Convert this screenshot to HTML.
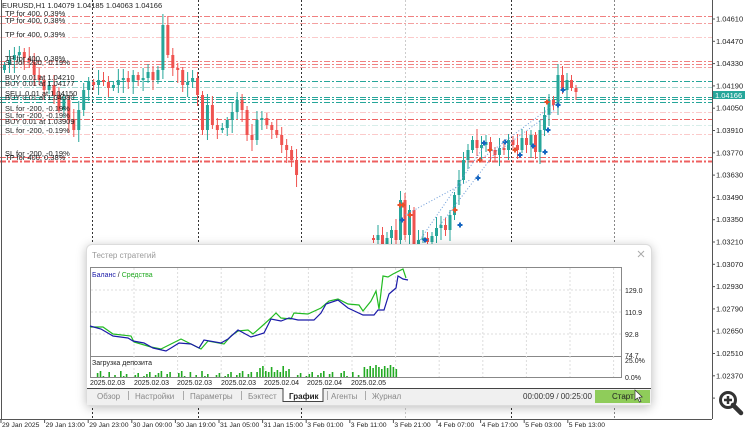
<!DOCTYPE html>
<html><head><meta charset="utf-8"><style>
html,body{margin:0;padding:0;width:750px;height:432px;overflow:hidden;background:#fff;font-family:"Liberation Sans","DejaVu Sans",sans-serif}
svg text{font-family:"Liberation Sans","DejaVu Sans",sans-serif}
#dlg{position:absolute;left:86px;top:244px;width:564px;height:160px;background:#fff;border:1px solid #dcdcdc;border-radius:6px;box-shadow:0 2px 10px rgba(0,0,0,.25)}
</style></head><body>
<svg id="main" width="750" height="432" style="position:absolute;left:0;top:0" xmlns="http://www.w3.org/2000/svg">
<g id="grid" stroke-width="1" fill="none">
<line x1="92.5" y1="0" x2="92.5" y2="419" stroke="#333" stroke-dasharray="2,2"/>
<line x1="198.5" y1="0" x2="198.5" y2="419" stroke="#333" stroke-dasharray="2,2"/>
<line x1="301.5" y1="0" x2="301.5" y2="419" stroke="#333" stroke-dasharray="2,2"/>
<line x1="405.5" y1="0" x2="405.5" y2="419" stroke="#ccc" stroke-dasharray="2,2"/>
<line x1="511.5" y1="0" x2="511.5" y2="419" stroke="#333" stroke-dasharray="2,2"/>
<line x1="614.5" y1="0" x2="614.5" y2="419" stroke="#888" stroke-dasharray="2,2"/>
</g>
<g fill="none" stroke-dasharray="6,2,2,2">
<line x1="0" y1="16.5" x2="712" y2="16.5" stroke="#f08080"/>
<line x1="0" y1="23.5" x2="712" y2="23.5" stroke="#f4a0a0"/>
<line x1="0" y1="37.5" x2="712" y2="37.5" stroke="#fbcaca"/>
<line x1="0" y1="61.5" x2="712" y2="61.5" stroke="#f08080"/>
<line x1="0" y1="64.5" x2="712" y2="64.5" stroke="#f08080"/>
<line x1="0" y1="67.5" x2="712" y2="67.5" stroke="#f4a0a0"/>
<line x1="0" y1="81.5" x2="712" y2="81.5" stroke="#26a69a"/>
<line x1="0" y1="87.5" x2="712" y2="87.5" stroke="#a8d8d2"/>
<line x1="0" y1="97.5" x2="712" y2="97.5" stroke="#26a69a"/>
<line x1="0" y1="99.5" x2="712" y2="99.5" stroke="#26a69a"/>
<line x1="0" y1="102.5" x2="712" y2="102.5" stroke="#26a69a"/>
<line x1="0" y1="112.5" x2="712" y2="112.5" stroke="#fbcaca"/>
<line x1="0" y1="119.5" x2="712" y2="119.5" stroke="#ee6060"/>
<line x1="0" y1="125.5" x2="712" y2="125.5" stroke="#d8eeea"/>
<line x1="0" y1="134.5" x2="712" y2="134.5" stroke="#fbcaca"/>
<line x1="0" y1="157.5" x2="712" y2="157.5" stroke="#ee6060"/>
<line x1="0" y1="161.5" x2="712" y2="161.5" stroke="#ee6060" stroke-width="2"/>
</g>
<g id="candles"></g>
<g fill="#222" font-size="7.5">
<text x="2" y="8">EURUSD,H1  1.04079 1.04185 1.04063 1.04166</text>
<text x="5" y="16">TP for 400, 0.39%</text>
<text x="5" y="23">TP for 400, 0.38%</text>
<text x="5" y="37">TP for 400, 0.39%</text>
<text x="5" y="61">TP for 400, 0.38%</text>
<text x="5" y="65">SL for -200, -0.19%</text>
<text x="5" y="80">BUY 0.01 at 1.04210</text>
<text x="5" y="86">BUY 0.01 at 1.04177</text>
<text x="5" y="96">SELL 0.01 at 1.04150</text>
<text x="5" y="100">BUY 0.01 at 1.04080</text>
<text x="5" y="111">SL for -200, -0.19%</text>
<text x="5" y="118">SL for -200, -0.19%</text>
<text x="5" y="124">BUY 0.01 at 1.03909</text>
<text x="5" y="133">SL for -200, -0.19%</text>
<text x="5" y="156">SL for -200, -0.19%</text>
<text x="5" y="160">TP for 400, 0.38%</text>
</g>
<line x1="712.5" y1="0" x2="712.5" y2="419" stroke="#555"/>
<line x1="0" y1="419.5" x2="712" y2="419.5" stroke="#555"/>
<line x1="1.5" y1="0" x2="1.5" y2="419" stroke="#555"/>
<g id="yax" fill="#222" font-size="7.5"></g>
<rect x="713" y="91" width="32" height="8" fill="#26a69a"/>
<text x="715" y="98" fill="#fff" font-size="7.5">1.04166</text>
<g id="xax" fill="#222" font-size="6.8"></g>
<g transform="translate(716,388)">
<circle cx="12" cy="12" r="7.5" fill="none" stroke="#333" stroke-width="3"/>
<line x1="17" y1="17" x2="25" y2="25" stroke="#333" stroke-width="4.5" stroke-linecap="round"/>
<path d="M12 8v8M8 12h8" stroke="#333" stroke-width="2.5"/>
</g>
</svg>

<div id="dlg">
<svg width="564" height="160" xmlns="http://www.w3.org/2000/svg" style="position:absolute;left:0;top:0">
<text x="5" y="13" font-size="8" fill="#999">Тестер стратегий</text>
<path d="M551 6l6 6M557 6l-6 6" stroke="#aaa" stroke-width="1"/>
<g transform="translate(-86,-244)">
<rect x="89.5" y="266.5" width="531" height="110" fill="#fff" stroke="#888"/>
<line x1="89" y1="355.5" x2="621" y2="355.5" stroke="#888"/>
<g id="dgrid" stroke="#ddd" stroke-dasharray="2,2"></g>
<polyline fill="none" stroke="#22bb22" stroke-width="1.2" points="89,326 102,326 112,333 130,335 133,341 150,346 160,348 170,343 180,338 190,343 200,348 207,340 223,343 230,335 237,330 247,329 252,333 260,326 270,317 275,312 280,317 290,318 293,312 307,313 320,307 328,300 337,298 347,303 358,304 362,310 370,300 375,290 378,308 382,275 387,276 392,273 402,268 405,277"/>
<polyline fill="none" stroke="#1a1aa8" stroke-width="1.2" points="89,325 100,328 112,335 127,337 132,340 143,342 152,347 165,350 170,347 178,342 190,343 198,347 203,339 220,342 227,338 237,329 250,336 263,332 270,318 280,320 288,317 297,319 313,319 320,312 325,303 337,299 347,307 362,314 373,314 377,309 383,309 388,293 395,287 397,275 402,278 407,279"/>
<g id="dep" fill="#22aa22"></g>
<g font-size="7" fill="#222">
<text x="624" y="292">129.0</text><text x="624" y="314">110.9</text><text x="624" y="336">92.8</text><text x="624" y="357">74.7</text><text x="624" y="362">25.0%</text><text x="624" y="379">0.0%</text>
<text x="91" y="276" fill="#1a1aa8">Баланс <tspan fill="#222">/</tspan> <tspan fill="#22aa22">Средства</tspan></text>
<text x="91" y="364">Загрузка депозита</text>
<text x="89" y="384">2025.02.03</text><text x="133" y="384">2025.02.03</text><text x="176" y="384">2025.02.03</text><text x="220" y="384">2025.02.03</text><text x="263" y="384">2025.02.04</text><text x="306" y="384">2025.02.04</text><text x="350" y="384">2025.02.05</text>
</g>
<rect x="86" y="387" width="564" height="17" fill="#f0f0f0"/>
<line x1="86" y1="387.5" x2="650" y2="387.5" stroke="#444"/>
<rect x="282" y="387" width="40" height="14" fill="#fff"/>
<line x1="282" y1="387" x2="282" y2="401" stroke="#444"/><line x1="322" y1="387" x2="322" y2="401" stroke="#444"/>
<line x1="282" y1="400.5" x2="322" y2="400.5" stroke="#444"/>
<g font-size="8" fill="#888">
<text x="96" y="398">Обзор</text><text x="134" y="398">Настройки</text><text x="189" y="398">Параметры</text><text x="247" y="398">Бэктест</text>
<text x="288" y="398" fill="#222" font-weight="bold">График</text><text x="330" y="398">Агенты</text><text x="371" y="398">Журнал</text>
</g>
<g stroke="#aaa"><line x1="127.5" y1="390" x2="127.5" y2="399"/><line x1="182.5" y1="390" x2="182.5" y2="399"/><line x1="240.5" y1="390" x2="240.5" y2="399"/><line x1="326.5" y1="390" x2="326.5" y2="399"/><line x1="364.5" y1="390" x2="364.5" y2="399"/></g>
<text x="522" y="398" font-size="8" fill="#333">00:00:09 / 00:25:00</text>
<rect x="594" y="389" width="55" height="13" fill="#8fcc5a"/>
<text x="611" y="398" font-size="8" fill="#222">Старт</text>
<path d="M634 389v10l2.5-2 2 4 1.5-.7-2-4 3.2-.3z" fill="#fff" stroke="#333" stroke-width=".7"/>
</g>
</svg>
</div>

<script>
var NS="http://www.w3.org/2000/svg";
function el(p,t,a,txt){var e=document.createElementNS(NS,t);for(var k in a)e.setAttribute(k,a[k]);if(txt)e.textContent=txt;p.appendChild(e);return e;}
var cg=document.getElementById("candles");
var L=[65,60,55,52,58,62,75,80,90,85,95,110,100,120,130,110,90,82,85,80,82,88,85,80,78,82,75,80,78,72,80,70,25,55,68,70,85,82,78,95,130,105,125,130,128,120,112,100,110,135,140,120,118,125,130,135,145,150,160,175];
var R=[240,235,245,238,230,240,200,235,210,245,240,238,242,236,228,225,230,215,195,180,160,150,140,148,145,142,150,155,148,150,140,145,150,138,145,135,152,130,115,100,105,75,90,80,88,92];
function draw(arr,x0,prev,st){
 for(var i=0;i<arr.length;i++){var x=x0+i*st;var o=i?arr[i-1]:prev,c=arr[i];
  var up=c<o;var col=up?"#26a69a":"#ef5350";var t=Math.min(o,c),b=Math.max(o,c);if(b-t<2)b=t+2;
  var w=(i*7)%9;el(cg,"line",{x1:x+1.5,x2:x+1.5,y1:t-3-w,y2:b+3+((i*5)%11),stroke:col});
  el(cg,"rect",{x:x,y:t,width:3,height:b-t,fill:col});}
}
draw(L,3,70,4.95);draw(R,372,238,4.5);
var mk=[[400,205,"#e8502a"],[402,220,"#1565c0"],[410,215,"#e8502a"],[425,240,"#1565c0"],[455,210,"#e8502a"],[460,225,"#1565c0"],[480,160,"#e8502a"],[484,143,"#1565c0"],[478,178,"#1565c0"],[490,150,"#e8502a"],[505,142,"#1565c0"],[515,150,"#e8502a"],[520,155,"#1565c0"],[533,146,"#1565c0"],[545,152,"#1565c0"],[548,130,"#1565c0"],[547,102,"#e8502a"],[558,105,"#1565c0"],[563,90,"#1565c0"],[403,205,"#e8502a"]];
mk.forEach(function(m){el(cg,"path",{d:"M"+(m[0]-2.5)+" "+m[1]+"h5M"+m[0]+" "+(m[1]-2.5)+"v5",stroke:m[2],"stroke-width":2});});
[[405,215,470,180],[420,240,485,145],[440,225,505,140],[480,160,560,100],[500,150,555,110]].forEach(function(l){el(cg,"line",{x1:l[0],y1:l[1],x2:l[2],y2:l[3],stroke:"#6a9ad8","stroke-dasharray":"1,2"});});
var yv=["1.04610","1.04470","1.04330","1.04190","1.04050","1.03910","1.03770","1.03630","1.03490","1.03350","1.03210","1.03070","1.02930","1.02790","1.02650","1.02510","1.02370","1.02230"];
var ya=document.getElementById("yax");
yv.forEach(function(v,i){var y=19+i*22.3;el(ya,"line",{x1:712,x2:715,y1:y,y2:y,stroke:"#555"});if(i!==17)el(ya,"text",{x:716,y:y+2.5},v);});
var xv=["29 Jan 2025","29 Jan 13:00","29 Jan 23:00","30 Jan 09:00","30 Jan 19:00","31 Jan 05:00","31 Jan 15:00","3 Feb 01:00","3 Feb 11:00","3 Feb 21:00","4 Feb 07:00","4 Feb 17:00","5 Feb 03:00","5 Feb 13:00"];
var xa=document.getElementById("xax");
xv.forEach(function(v,i){var x=1+i*43.6;el(xa,"line",{x1:x,x2:x,y1:419,y2:423,stroke:"#555"});el(xa,"text",{x:x+1,y:427},v);});
var dg=document.getElementById("dgrid");
for(var x=133;x<620;x+=43.6)el(dg,"line",{x1:x,x2:x,y1:267,y2:376});
[289,311,333].forEach(function(y){el(dg,"line",{x1:90,x2:620,y1:y,y2:y});});
var dp=document.getElementById("dep");
for(var i=0;i<110;i++){var x=90+i*2.9;if(x>395)break;var h=((i*37)%7);if(i%4==1)h=0;
 if(x>255&&x<290)h+=5;if(x>360)h=8+((i*3)%5);if(h>0)el(dp,"rect",{x:x,y:376-h,width:1.6,height:h});}
</script>
</body></html>
